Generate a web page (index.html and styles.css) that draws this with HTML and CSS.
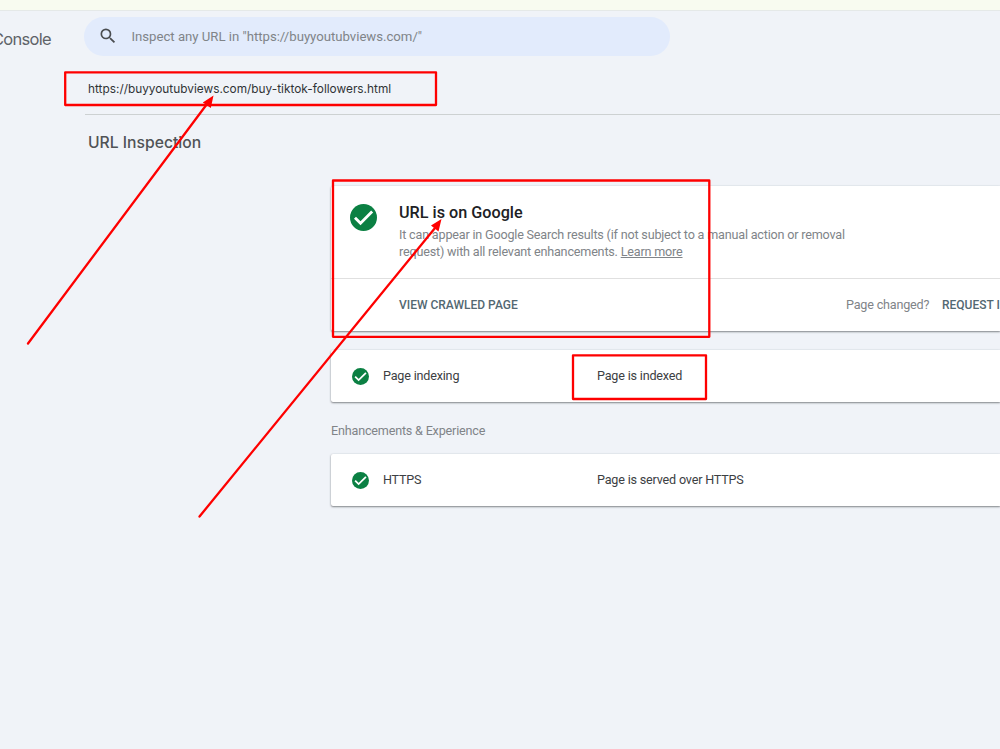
FILE: index.html
```html
<!DOCTYPE html>
<html lang="en">
<head>
<meta charset="utf-8">
<title>URL Inspection</title>
<link rel="stylesheet" href="styles.css">
</head>
<body>
<div class="page">
  <div class="strip"></div>
  <header class="header">
    <div class="brand"><span>Console</span></div>
    <div class="search">
      <svg class="search-icon" viewBox="0 0 24 24"><path d="M15.5 14h-.79l-.28-.27A6.47 6.47 0 0 0 16 9.5 6.5 6.5 0 1 0 9.5 16c1.61 0 3.09-.59 4.23-1.57l.27.28v.79l5 4.99L20.49 19l-4.99-5zm-6 0C7.01 14 5 11.99 5 9.5S7.01 5 9.5 5 14 7.01 14 9.5 11.99 14 9.5 14z"/></svg>
      <span class="search-text">Inspect any URL in "https://buyyoutubviews.com/"</span>
    </div>
  </header>
  <div class="url-row"><span class="url-text">https://buyyoutubviews.com/buy-tiktok-followers.html</span></div>
  <h1 class="title">URL Inspection</h1>
  <main class="content">
    <section class="card verdict">
      <div class="verdict-top">
        <svg class="check-large" viewBox="2 2 20 20"><circle cx="12" cy="12" r="10" fill="#0b8043"/><path d="M5.700 12.100l4.100 4.100 8.600-8.600" fill="none" stroke="#fff" stroke-width="2.100"/></svg>
        <div class="verdict-copy">
          <h2 class="verdict-title">URL is on Google</h2>
          <p class="verdict-text">It can appear in Google Search results (if not subject to a manual action or removal<br>request) with all relevant enhancements. <a class="link">Learn more</a></p>
        </div>
      </div>
      <div class="actions">
        <span class="action view">VIEW CRAWLED PAGE</span>
        <span class="changed">Page changed?</span>
        <span class="action">REQUEST INDEXING</span>
      </div>
    </section>
    <section class="card row">
      <svg class="check" viewBox="2 2 20 20"><circle cx="12" cy="12" r="10" fill="#0b8043"/><path d="M5.700 12.100l4.100 4.100 8.600-8.600" fill="none" stroke="#fff" stroke-width="2.100"/></svg>
      <span class="name">Page indexing</span><span>Page is indexed</span>
    </section>
    <h3 class="group">Enhancements &amp; Experience</h3>
    <section class="card row">
      <svg class="check" viewBox="2 2 20 20"><circle cx="12" cy="12" r="10" fill="#0b8043"/><path d="M5.700 12.100l4.100 4.100 8.600-8.600" fill="none" stroke="#fff" stroke-width="2.100"/></svg>
      <span class="name">HTTPS</span><span>Page is served over HTTPS</span>
    </section>
  </main>
  <svg class="marks" viewBox="0 0 1000 749">
    <g fill="none" stroke="#fe0000" stroke-width="2.300" stroke-linejoin="round" stroke-linecap="round">
      <rect x="65.200" y="72.300" width="370.800" height="32.700"/>
      <rect x="333" y="180.500" width="376.300" height="156.300"/>
      <rect x="573" y="355.300" width="133" height="43.700"/>
      <path d="M28 343.500L207 104M199.500 516.500L435 228"/>
    </g>
    <path d="M213.500 95.500L210.800 108L202.800 102.500ZM441.500 219L438.500 231.500L431 225.500Z" fill="#fe0000"/>
  </svg>
</div>
</body>
</html>
```
FILE: styles.css
```css
* { box-sizing: border-box; }
body { margin: 0; background: #f0f3f8; font-family: Roboto, "Liberation Sans", sans-serif; font-size: 12.600px; letter-spacing: -0.190px; color: #3c4043; }
h1, h2, h3, p { margin: 0; font-weight: 400; }
.page { position: relative; width: 1000px; height: 749px; overflow: hidden; white-space: nowrap; }
.strip { height: 11px; background: #f8fbf0; border-bottom: 1px solid #e5e9e8; }
.header { display: flex; height: 52px; padding-top: 6px; }
.brand { width: 84px; height: 43px; padding-right: 33px; display: flex; justify-content: flex-end; align-items: center; font: 400 16.500px Inter, sans-serif; letter-spacing: -0.7px; color: #5f6368; }
.search { display: flex; align-items: center; width: 586px; height: 39px; padding-left: 14px; border-radius: 20px; background: #e2ebfc; }
.search-icon { width: 20px; height: 20px; margin: 0 13.500px 1px 0; fill: #4a4d50; }
.search-text { font-size: 13.200px; letter-spacing: -0.020px; color: #808488; }
.url-row { height: 52px; margin-left: 85px; padding: 1px 0 0 3px; display: flex; align-items: center; border-bottom: 1px solid #cdd1d2; font: 400 11.850px Inter, sans-serif; letter-spacing: 0; color: #303336; }
.title { height: 71px; padding: 17px 0 0 88px; font: 500 15.700px/22px Inter, sans-serif; letter-spacing: 0; color: #505356; }
.content { padding-left: 331px; }
.card { background: #fff; border-radius: 2px 0 0 2px; box-shadow: 0 1px 2px rgba(60, 64, 67, .6), 0 0 2px rgba(60, 64, 67, .12); }
.verdict { height: 145px; }
.verdict-top { display: flex; height: 93px; padding: 18px 0 0 19px; border-bottom: 1px solid #e0e0e0; }
.check-large { width: 27px; height: 27px; margin-right: 22px; }
.verdict-title { height: 22px; margin-top: -2px; font-size: 16.200px; letter-spacing: 0; line-height: 22px; font-weight: 500; color: #202124; }
.verdict-text { margin-top: 3px; line-height: 16.500px; color: #808488; }
.link { text-decoration: underline; }
.actions { height: 51px; display: flex; align-items: center; padding-left: 68px; }
.actions > span { flex: none; }
.action { font-size: 12px; font-weight: 500; color: #536872; letter-spacing: 0; }
.view { width: 447px; }
.changed { width: 96px; color: #808488; }
.row { height: 52px; margin-top: 19px; display: flex; align-items: center; padding: 0 0 1px 21px; }
.check { width: 17px; height: 17px; margin: 1px 14px 0 0; }
.name { width: 214px; }
.group { margin-top: 20px; font-size: inherit; line-height: 18px; color: #808488; }
.group + .row { margin-top: 14px; }
.marks { position: absolute; inset: 0; width: 1000px; height: 749px; }
```
